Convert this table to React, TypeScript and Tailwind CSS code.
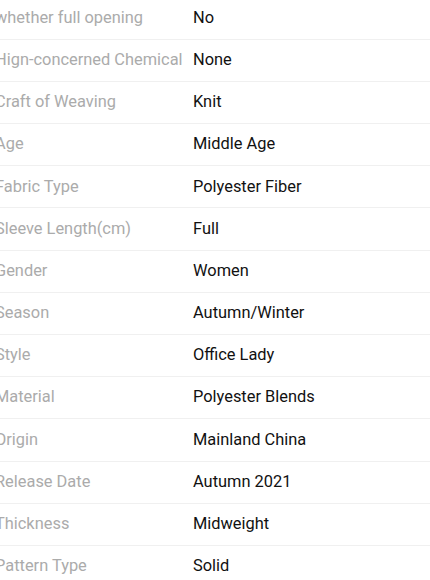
const specs: [string, string][] = [
  ["whether full opening", "No"],
  ["Hign-concerned Chemical", "None"],
  ["Craft of Weaving", "Knit"],
  ["Age", "Middle Age"],
  ["Fabric Type", "Polyester Fiber"],
  ["Sleeve Length(cm)", "Full"],
  ["Gender", "Women"],
  ["Season", "Autumn/Winter"],
  ["Style", "Office Lady"],
  ["Material", "Polyester Blends"],
  ["Origin", "Mainland China"],
  ["Release Date", "Autumn 2021"],
  ["Thickness", "Midweight"],
  ["Pattern Type", "Solid"],
];

const App = () => {
  return (
    <section className="h-[580px] w-[430px] overflow-hidden bg-white font-['Roboto',sans-serif] text-[16.4px]">
      <div className="-mt-[2.5px]">
        {specs.map(([label, value]) => (
          <div
            key={label}
            className="flex h-[42.2px] items-center border-b border-[#f0f0f0]"
          >
            <span className="-ml-[5px] w-[198px] shrink-0 whitespace-nowrap text-[#ababab]">
              {label}
            </span>
            <span className="text-[#111]">{value}</span>
          </div>
        ))}
      </div>
    </section>
  );
};

export default App;
